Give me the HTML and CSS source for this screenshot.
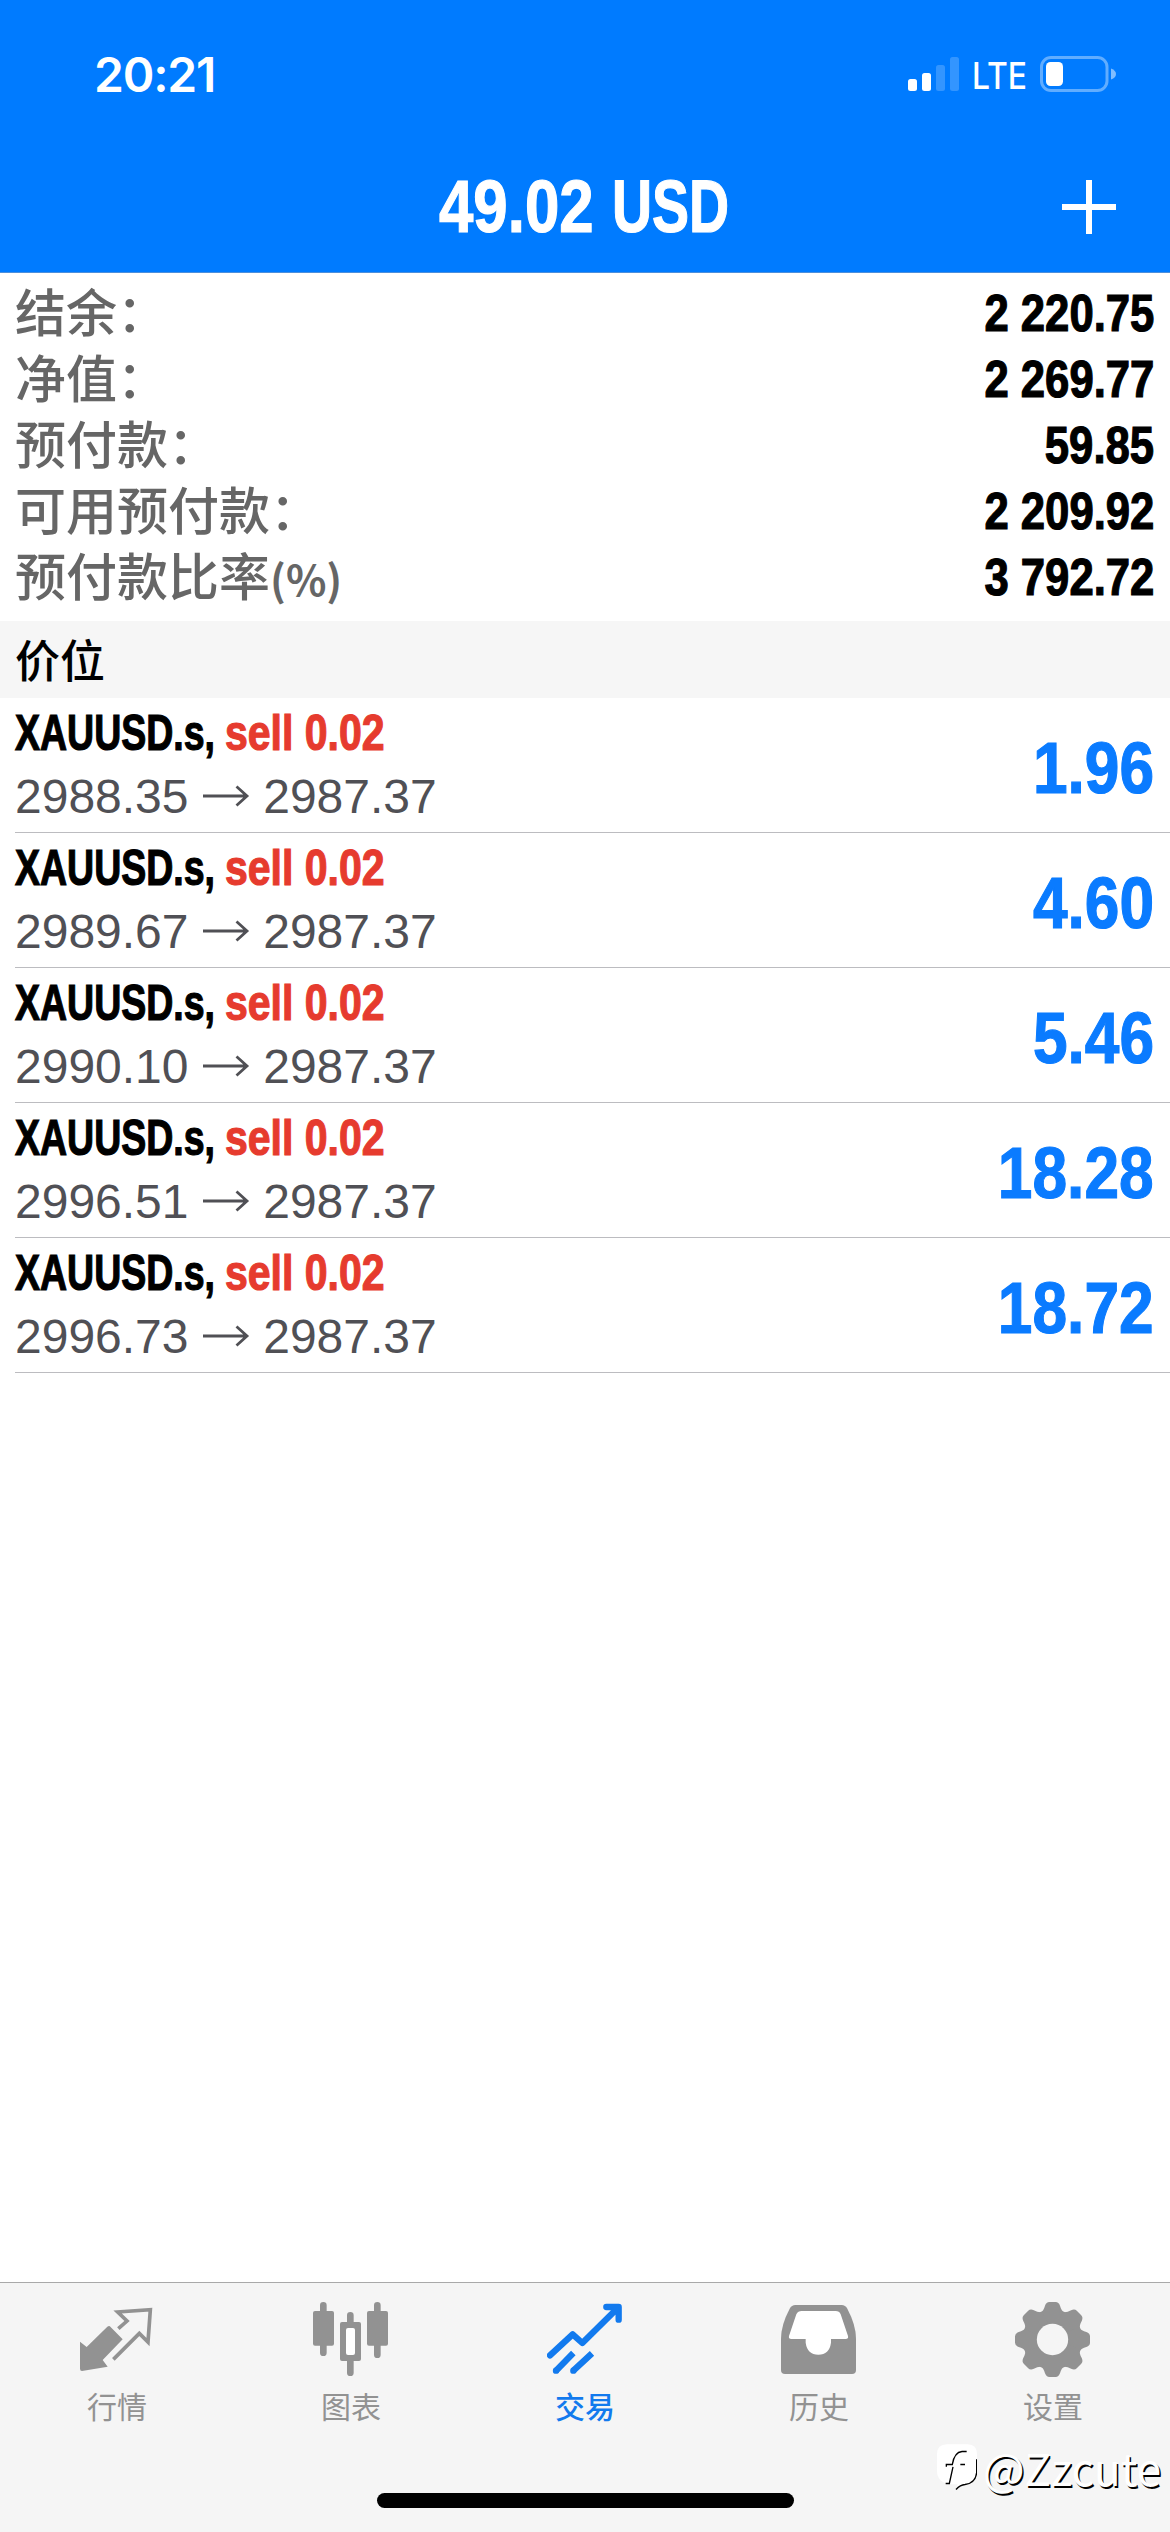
FILE: index.html
```html
<!DOCTYPE html>
<html lang="zh-CN">
<head>
<meta charset="utf-8">
<title>交易</title>
<link rel="stylesheet" href="styles.css">
</head>
<body>
<div class="app">
  <header class="header">
    <div class="status">
      <span class="time">20:21</span>
      <div class="status-right">
        <svg class="signal" viewBox="0 0 51 34" fill="#fff">
          <rect x="0" y="22" width="9" height="12" rx="2.5"/>
          <rect x="14" y="16" width="9" height="18" rx="2.5"/>
          <rect x="28" y="8" width="9" height="26" rx="2.5" opacity=".2"/>
          <rect x="42" y="0" width="9" height="34" rx="2.5" opacity=".2"/>
        </svg>
        <span class="network">LTE</span>
        <svg class="battery" viewBox="0 0 77 36">
          <rect x="1.5" y="1.500" width="65.500" height="33" rx="9.500" fill="none" stroke="#fff" stroke-width="3" opacity=".38"/>
          <rect x="6" y="6" width="17" height="24" rx="4.500" fill="#fff"/>
          <path d="M71 12.500q5 2 5 5.500t-5 5.500z" fill="#fff" opacity=".5"/>
        </svg>
      </div>
    </div>
    <div class="navbar">
      <h1 class="title"><span class="amount">49.02</span><span class="currency">USD</span></h1>
      <svg class="plus" viewBox="0 0 54 54" stroke="#fff" stroke-width="6"><path d="M27 0v54M0 27h54"/></svg>
    </div>
  </header>

  <main class="content">
    <dl class="summary">
      <div class="summary-row"><dt>结余：</dt><dd>2 220.75</dd></div>
      <div class="summary-row"><dt>净值：</dt><dd>2 269.77</dd></div>
      <div class="summary-row"><dt>预付款：</dt><dd>59.85</dd></div>
      <div class="summary-row"><dt>可用预付款：</dt><dd>2 209.92</dd></div>
      <div class="summary-row"><dt>预付款比率<span class="unit">(%)</span></dt><dd>3 792.72</dd></div>
    </dl>
    <h2 class="section">价位</h2>
    <ul class="positions">
      <li class="position">
        <div class="info">
          <div class="order"><span class="symbol">XAUUSD.s,</span><span class="side">sell 0.02</span></div>
          <div class="prices">2988.35 <svg class="arrow" viewBox="0 0 48 24"><path d="M1 12h44M34.500 2.500 45 12 34.500 21.500"/></svg> 2987.37</div>
        </div>
        <span class="profit">1.96</span>
      </li>
      <li class="position">
        <div class="info">
          <div class="order"><span class="symbol">XAUUSD.s,</span><span class="side">sell 0.02</span></div>
          <div class="prices">2989.67 <svg class="arrow" viewBox="0 0 48 24"><path d="M1 12h44M34.500 2.500 45 12 34.500 21.500"/></svg> 2987.37</div>
        </div>
        <span class="profit">4.60</span>
      </li>
      <li class="position">
        <div class="info">
          <div class="order"><span class="symbol">XAUUSD.s,</span><span class="side">sell 0.02</span></div>
          <div class="prices">2990.10 <svg class="arrow" viewBox="0 0 48 24"><path d="M1 12h44M34.500 2.500 45 12 34.500 21.500"/></svg> 2987.37</div>
        </div>
        <span class="profit">5.46</span>
      </li>
      <li class="position">
        <div class="info">
          <div class="order"><span class="symbol">XAUUSD.s,</span><span class="side">sell 0.02</span></div>
          <div class="prices">2996.51 <svg class="arrow" viewBox="0 0 48 24"><path d="M1 12h44M34.500 2.500 45 12 34.500 21.500"/></svg> 2987.37</div>
        </div>
        <span class="profit">18.28</span>
      </li>
      <li class="position">
        <div class="info">
          <div class="order"><span class="symbol">XAUUSD.s,</span><span class="side">sell 0.02</span></div>
          <div class="prices">2996.73 <svg class="arrow" viewBox="0 0 48 24"><path d="M1 12h44M34.500 2.500 45 12 34.500 21.500"/></svg> 2987.37</div>
        </div>
        <span class="profit">18.72</span>
      </li>
    </ul>
  </main>

  <nav class="tabbar">
    <a class="tab">
      <svg class="icon" viewBox="87 96 228 228">
        <path d="M178 167 218 208 158 270 173 290 96 303 Q90 303 90 296V215L110 231 172 170Q178 165 182 171Z" fill="currentColor"/>
        <path d="M205 176 231 153 203 126 301 119 294 216 268 190 190 268" fill="none" stroke="currentColor" stroke-width="11"/>
      </svg>
      <span>行情</span>
    </a>
    <a class="tab">
      <svg class="icon" viewBox="789 96 228 228">
        <g stroke="currentColor" stroke-width="20" stroke-linecap="round"><path d="M820 106V248M982 106V254M901 136V165M901 265V308"/></g>
        <g fill="currentColor"><rect x="789" y="123" width="63" height="104" rx="6"/><rect x="951" y="123" width="63" height="104" rx="6"/><rect x="870" y="156" width="63" height="117" rx="6"/></g>
        <rect x="888" y="174" width="27" height="81" rx="6" fill="#fff"/>
      </svg>
      <span>图表</span>
    </a>
    <a class="tab active">
      <svg class="icon" viewBox="111 96 228 228" fill="none" stroke="currentColor" stroke-width="19" stroke-linecap="round" stroke-linejoin="round">
        <path d="M120 256 188 193 217 219 324 113M289 111H326V149"/>
        <path d="M138 302 190 249M190 302 246 250" stroke-linecap="butt"/><path d="M138 302h0M190 302h0"/>
      </svg>
      <span>交易</span>
    </a>
    <a class="tab">
      <svg class="icon" viewBox="813 96 228 228">
        <path d="M856 105H995Q1006 105 1012 116 1038 165 1038 206V300Q1038 312 1026 312H825Q813 312 813 300V206Q813 165 839 116 845 105 856 105Z" fill="currentColor"/>
        <path d="M875 123H977Q988 123 992 133L1014 198Q1016 207 1007 207H963V218Q958 254 925 254 892 254 887 218V207H844Q835 207 837 198L859 133Q864 123 875 123Z" fill="#fff"/>
      </svg>
      <span>历史</span>
    </a>
    <a class="tab">
      <svg class="icon" viewBox="345 96 228 228">
        <g fill="currentColor">
          <circle cx="457.500" cy="208.500" r="90"/>
          <g id="teeth"><path id="tooth" d="M422 128Q431 122 435 107 439 96 448 96H467Q476 96 480 107 484 122 493 128L480 170H435Z"/>
          <use href="#tooth" transform="rotate(45 457.500 208.500)"/><use href="#tooth" transform="rotate(90 457.500 208.500)"/><use href="#tooth" transform="rotate(135 457.500 208.500)"/></g>
          <use href="#teeth" transform="rotate(180 457.500 208.500)"/>
        </g>
        <circle cx="457.500" cy="208.500" r="47" fill="#f5f5f5"/>
      </svg>
      <span>设置</span>
    </a>
    <div class="home-indicator"></div>
    <div class="watermark">
      <svg class="mark" viewBox="0 0 120 140">
        <path d="M30 0H92Q120 0 120 30V80Q118 116 84 121 72 122 56 136L62 120 46 120Q0 118 0 80V30Q0 0 30 0Z" fill="#fff"/>
        <path d="M119 45V85Q116 117 84 121 70 122 57 136M28 68V61H46Q52 24 75 22H89M48 68 37 118H26M70 61H84" fill="none" stroke="#000" stroke-width="4"/>
      </svg>
      <span class="handle">@Zzcute</span>
    </div>
  </nav>
</div>
</body>
</html>
```
FILE: styles.css
```css
* { box-sizing: border-box; margin: 0; padding: 0; }

body {
  width: 1170px;
  background: #fff;
  font-family: "Liberation Sans", "Noto Sans CJK SC", sans-serif;
  color: #000;
}

svg { display: block; flex: none; }

.app {
  display: flex;
  flex-direction: column;
  width: 1170px;
  height: 2532px;
  overflow: hidden;
}

.header {
  height: 273px;
  background: #007bff;
  border-bottom: 1px solid #4d8fdc;
  color: #fff;
}

.status {
  display: flex;
  justify-content: space-between;
  height: 141px;
  padding: 56px 53px 0 94px;
}
.time {
  font: 600 48px/37px Inter, sans-serif;
  letter-spacing: -1.2px;
}
.status-right { display: flex; align-items: flex-start; height: 36px; }
.signal { width: 51px; height: 34px; margin-top: 1px; }
.network {
  width: 53px;
  margin: 6px 15px 0 13px;
  font: 500 37px/28px Inter, sans-serif;
  transform: scaleX(.86);
  transform-origin: left center;
}
.battery { width: 77px; height: 36px; }

.navbar {
  display: grid;
  grid-template-columns: 1fr auto 1fr;
  align-items: center;
  height: 131px;
  padding: 0 54px;
}
.title {
  grid-column: 2;
  display: flex;
  gap: 18px;
  padding: 1px 3px 0 0;
  font: bold 74px/80px "Liberation Sans", sans-serif;
}
.title, .summary dd, .order, .profit { -webkit-text-stroke: 1.2px currentColor; }
.amount, .currency, .symbol, .side {
  transform-origin: left center;
  white-space: nowrap;
}
.amount { width: 155px; transform: scaleX(.835); }
.currency { width: 116px; transform: scaleX(.75); }
.plus { width: 54px; height: 54px; justify-self: end; }

.summary { height: 348px; padding: 7px 16px 0; }
.summary-row {
  display: flex;
  justify-content: space-between;
  height: 66px;
  line-height: 66px;
}
.summary dt {
  margin-top: -3px;
  font-family: "Noto Sans CJK SC", sans-serif;
  font-size: 51px;
  font-weight: 500;
  color: #666;
}
.summary dt:not(:empty) { margin-left: -1px; }
.unit { font-size: 42px; font-weight: 700; }
.summary dd {
  font-size: 52px;
  font-weight: bold;
  transform: scaleX(.84);
  transform-origin: right center;
}

.section {
  height: 77px;
  padding-left: 15px;
  background: #f6f6f6;
  font: 500 45px/75px "Noto Sans CJK SC", sans-serif;
}

.positions { list-style: none; padding-left: 15px; }
.position {
  display: flex;
  justify-content: space-between;
  align-items: center;
  height: 135px;
  padding-right: 16px;
  border-bottom: 1px solid #bcbcc0;
}
.info { padding-top: 2px; }
.order {
  display: flex;
  gap: 9px;
  height: 62px;
  font: bold 50px/62px "Liberation Sans", sans-serif;
}
.symbol { width: 201px; transform: scaleX(.75); }
.side { width: 160px; transform: scaleX(.82); color: #e63b2e; }
.prices {
  height: 66px;
  font-size: 48px;
  line-height: 66px;
  color: #505055;
}
.arrow {
  display: inline-block;
  width: 48px;
  height: 24px;
  vertical-align: 5px;
  fill: none;
  stroke: currentColor;
  stroke-width: 2.800;
}
.profit {
  padding-top: 5px;
  font: bold 73px/80px "Liberation Sans", sans-serif;
  color: #0a7bff;
  transform: scaleX(.853);
  transform-origin: right center;
}

.tabbar {
  position: relative;
  display: grid;
  grid-template-columns: repeat(5, 1fr);
  height: 250px;
  margin-top: auto;
  border-top: 1px solid #a9a9a9;
  background: #f5f5f5;
}
.tab {
  display: flex;
  flex-direction: column;
  align-items: center;
  padding-top: 19px;
  font: 400 30px/40px "Noto Sans CJK SC", sans-serif;
  color: #929292;
}
.tab.active { color: #127aee; font-weight: 500; }
.icon { width: 76px; height: 76px; margin-bottom: 7px; }

.home-indicator {
  position: absolute;
  left: 377px;
  bottom: 24px;
  width: 417px;
  height: 15px;
  border-radius: 8px;
  background: #000;
}

.watermark {
  position: absolute;
  right: 8px;
  bottom: 37px;
  display: flex;
  gap: 6px;
  align-items: center;
}
.mark { width: 40px; height: 47px; }
.handle {
  width: 179px;
  font: 400 44px/56px "Noto Sans CJK SC", sans-serif;
  color: #fff;
  text-shadow: 1.5px 1.5px 0 #000;
}
```
